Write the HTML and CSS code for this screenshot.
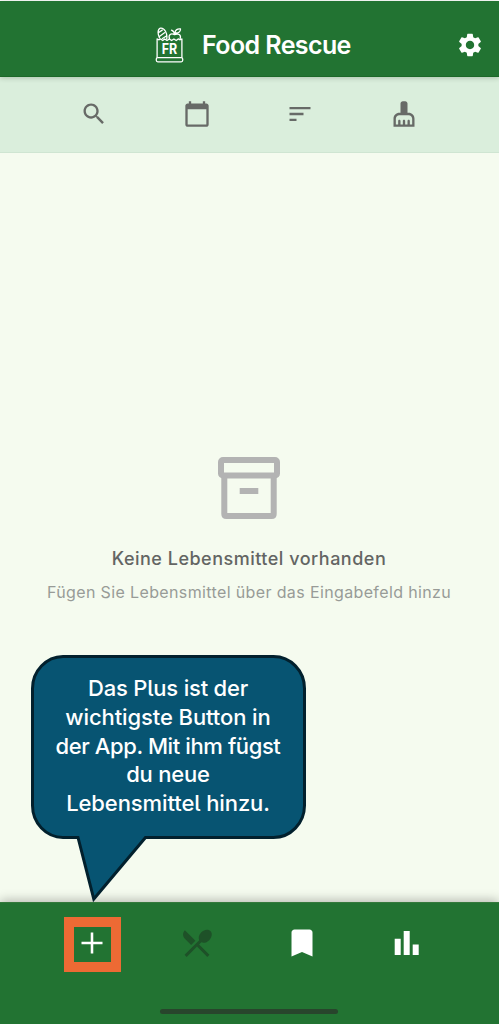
FILE: index.html
```html
<!DOCTYPE html>
<html lang="de">
<head>
<meta charset="utf-8">
<title>Food Rescue</title>
<link rel="stylesheet" href="styles.css">
</head>
<body>
<div class="app">
  <header class="header">
    <div class="brand">
      <svg class="logo" viewBox="0 0 28 36" fill="none" stroke="#fff" stroke-width="1.3" stroke-linejoin="round" stroke-linecap="round">
        <path d="M1.6 12v18.2M26.4 12v18.2M1.6 12l2 .8 1.6-.9 2 1.6 2-1.5 2.3 1.5 2.3-1.5 2.3 1.5 2.3-1.5 2.3 1.5 2-1.6 1.6.9 2-.8"/>
        <rect x=".8" y="30.6" width="26.4" height="4.2" rx="1.5"/>
        <path d="M4 11C2 7 2 2 5 1.1c4-.6 7.2 5.4 6.2 10.9M3.2 5.5l3.5-2.4M4.2 9.3l4.8-3.6M7 11.5l3.5-2.3"/>
        <path d="M14 11.8c-1.5-4.2 1.5-6 5-4.2 3.5-1.5 7 0 5.7 4M19 7.5c0-2-1-3.5-3-4.3M19.5 5.8c.2-3 2.5-4.2 5.5-3.8 0 3-2.2 4.6-5.5 3.8z"/>
        <text class="logo-text" x="14" y="27" text-anchor="middle" textLength="15.5" lengthAdjust="spacingAndGlyphs">FR</text>
      </svg>
      <h1 class="title">Food Rescue</h1>
    </div>
    <svg class="icon settings" viewBox="0 0 24 24"><path d="M19.14 12.94c.04-.3.06-.61.06-.94 0-.32-.02-.64-.07-.94l2.03-1.58c.18-.14.23-.41.12-.61l-1.92-3.32c-.12-.22-.37-.29-.59-.22l-2.39.96c-.5-.38-1.03-.7-1.62-.94l-.36-2.54c-.04-.24-.24-.41-.48-.41h-3.84c-.24 0-.43.17-.47.41l-.36 2.54c-.59.24-1.13.57-1.62.94l-2.39-.96c-.22-.08-.47 0-.59.22L2.74 8.87c-.12.21-.08.47.12.61l2.03 1.58c-.05.3-.09.63-.09.94s.02.64.07.94l-2.03 1.58c-.18.14-.23.41-.12.61l1.92 3.32c.12.22.37.29.59.22l2.39-.96c.5.38 1.03.7 1.62.94l.36 2.54c.05.24.24.41.48.41h3.84c.24 0 .44-.17.47-.41l.36-2.54c.59-.24 1.13-.56 1.62-.94l2.39.96c.22.08.47 0 .59-.22l1.92-3.32c.12-.22.07-.47-.12-.61l-2.01-1.58zM12 15.6c-1.98 0-3.6-1.62-3.6-3.6s1.62-3.6 3.6-3.6 3.6 1.62 3.6 3.6-1.62 3.6-3.6 3.6z"/></svg>
  </header>

  <div class="toolbar">
    <svg class="icon" viewBox="0 0 24 24"><path d="M15.5 14h-.79l-.28-.27C15.41 12.59 16 11.11 16 9.5 16 5.91 13.09 3 9.5 3S3 5.91 3 9.5 5.91 16 9.5 16c1.61 0 3.09-.59 4.23-1.57l.27.28v.79l5 4.99L20.49 19l-4.99-5zm-6 0C7.01 14 5 11.99 5 9.5S7.01 5 9.5 5 14 7.01 14 9.5 11.99 14 9.5 14z"/></svg>
    <svg class="icon" viewBox="0 0 24 24"><path d="M20 3h-1V1h-2v2H7V1H5v2H4c-1.1 0-2 .9-2 2v16c0 1.1.9 2 2 2h16c1.1 0 2-.9 2-2V5c0-1.1-.9-2-2-2zm0 18H4V8h16v13z"/></svg>
    <svg class="icon" viewBox="0 0 24 24"><path d="M3 18h6v-2H3v2zM3 6v2h18V6H3zm0 7h12v-2H3v2z"/></svg>
    <svg class="icon" viewBox="0 0 24 24"><path d="M16 11h-1V3c0-1.1-.9-2-2-2h-2c-1.1 0-2 .9-2 2v8H8c-2.76 0-5 2.24-5 5v7h18v-7c0-2.76-2.24-5-5-5zm3 10h-2v-3c0-.55-.45-1-1-1s-1 .45-1 1v3h-2v-3c0-.55-.45-1-1-1s-1 .45-1 1v3H9v-3c0-.55-.45-1-1-1s-1 .45-1 1v3H5v-5c0-1.65 1.35-3 3-3h8c1.65 0 3 1.35 3 3v5z"/></svg>
  </div>

  <main class="content">
    <svg class="empty-icon" viewBox="0 0 62 62" fill="none" stroke="#b3b3b3" stroke-width="6" stroke-linejoin="round">
      <rect x="3" y="3" width="56" height="15.5" rx="2"/>
      <path d="M6.3 19v38q0 2 2 2h45.4q2 0 2-2V19"/>
      <path d="M21.7 34h18.6"/>
    </svg>
    <h2 class="empty-title">Keine Lebensmittel vorhanden</h2>
    <p class="empty-text">Fügen Sie Lebensmittel über das Eingabefeld hinzu</p>
  </main>

  <nav class="nav">
    <span class="nav-item"><svg class="nav-icon" viewBox="0 0 24 24"><path d="M19 12.85h-6.15V19h-1.7v-6.15H5v-1.7h6.15V5h1.7v6.15H19z"/></svg></span>
    <span class="nav-item inactive"><svg class="nav-icon" viewBox="0 0 24 24"><path d="M8.1 13.34l2.83-2.83L3.91 3.5c-1.56 1.56-1.56 4.09 0 5.66l4.19 4.18zm6.78-1.81c1.53.71 3.68.21 5.27-1.38 1.91-1.91 2.28-4.65.81-6.12-1.46-1.46-4.2-1.1-6.12.81-1.59 1.59-2.09 3.74-1.38 5.27L3.7 19.87l1.41 1.41L12 14.41l6.88 6.88 1.41-1.41L13.41 13l1.47-1.47z"/></svg></span>
    <span class="nav-item"><svg class="nav-icon" viewBox="0 0 24 24"><path d="M17 3H7c-1.1 0-1.99.9-1.99 2L5 21l7-3 7 3V5c0-1.1-.9-2-2-2z"/></svg></span>
    <span class="nav-item"><svg class="nav-icon" viewBox="0 0 24 24"><path d="M3.8 9.2h4V20h-4zM9.8 4h4v16h-4zM15.8 13h4v7h-4z"/></svg></span>
    <span class="home-bar"></span>
  </nav>

  <div class="highlight"></div>
  <aside class="bubble">
    <svg class="bubble-shape" viewBox="0 0 280 252"><path d="M33 2.5H243.5A31 32 0 0 1 274.5 34.5V151.5A31 32 0 0 1 243.5 183.5H115.5L63.8 245L48 183.5H33A31 32 0 0 1 2.5 151.5V34.5A31 32 0 0 1 33 2.5Z" fill="#075472" stroke="#02202d" stroke-width="3"/></svg>
    <p class="bubble-text">Das Plus ist der<br><span class="wide">wichtigste Button in</span><br><span class="tight">der App. Mit ihm fügst</span><br>du neue<br><span class="wide">Lebensmittel hinzu.</span></p>
  </aside>
</div>
</body>
</html>
```

FILE: styles.css
```css
* { box-sizing: border-box; }

body {
  margin: 0;
  background: #fff;
  font-family: Inter, "Liberation Sans", sans-serif;
}

.app {
  position: relative;
  display: flex;
  flex-direction: column;
  height: 1024px;
  padding-top: 1px;
  overflow: hidden;
}

.header {
  position: relative;
  z-index: 1;
  display: flex;
  align-items: center;
  justify-content: space-between;
  height: 76px;
  padding: 12px 15px 0 155px;
  background: #227332;
  border-bottom: 1px solid #1c6828;
  box-shadow: 0 1px 5px rgba(0, 40, 0, .22);
}

.brand { display: flex; align-items: center; gap: 18px; }
.logo { width: 29px; height: 36px; margin-top: 1px; }
.logo-text { font: 700 14.5px Inter, sans-serif; fill: #fff; stroke: none; }

.title {
  margin: 0;
  color: #fff;
  font-size: 25px;
  font-weight: 600;
  line-height: 30px;
  letter-spacing: -.6px;
}

.icon { width: 28px; height: 28px; fill: #676a67; }
.settings { fill: #fff; }

.toolbar {
  display: grid;
  grid-template-columns: repeat(4, 103.4px);
  justify-items: center;
  align-items: center;
  height: 76px;
  padding: 0 0 1px 42px;
  background: #daeedc;
  border-bottom: 1px solid #cfe5d2;
}

.content {
  flex: 1;
  display: flex;
  flex-direction: column;
  align-items: center;
  padding: 304px 1px 0 0;
  background: #f5fbef;
}

.empty-icon { width: 62px; height: 62px; }

.empty-title {
  margin: 28px 0 0;
  color: #636563;
  font-size: 18px;
  font-weight: 500;
  line-height: 24px;
  letter-spacing: .5px;
  white-space: nowrap;
}

.empty-text {
  margin: 11px 0 0;
  color: #989b97;
  font-size: 16px;
  line-height: 20px;
  letter-spacing: .37px;
  white-space: nowrap;
}

.nav {
  position: relative;
  display: grid;
  grid-template-columns: repeat(4, 105px);
  justify-items: center;
  align-items: start;
  height: 122px;
  padding: 22px 0 0 39px;
  background: #227332;
  border-top: 1px solid #34793c;
  box-shadow: 0 -2px 10px rgba(0, 0, 0, .26);
}

.nav-icon { display: block; width: 36px; height: 36px; fill: #fff; }
.inactive .nav-icon { fill: #1e5128; }

.home-bar {
  position: absolute;
  left: 160px;
  bottom: 10px;
  width: 178px;
  height: 5px;
  border-radius: 3px;
  background: #28452c;
}

.highlight {
  position: absolute;
  left: 64px;
  top: 917px;
  width: 57px;
  height: 55px;
  border: 10px solid #ed6a34;
}

.bubble {
  position: absolute;
  left: 30px;
  top: 654px;
  width: 280px;
  height: 252px;
}

.bubble-shape { position: absolute; inset: 0; width: 280px; height: 252px; }

.bubble-text {
  position: relative;
  width: 276px;
  margin: 0;
  padding-top: 20px;
  color: #fff;
  font-size: 22px;
  font-weight: 500;
  line-height: 28.8px;
  letter-spacing: -.2px;
  text-align: center;
  white-space: nowrap;
  font-feature-settings: "cv05";
}

.wide { letter-spacing: -.1px; }
.tight { letter-spacing: -.4px; }
```
